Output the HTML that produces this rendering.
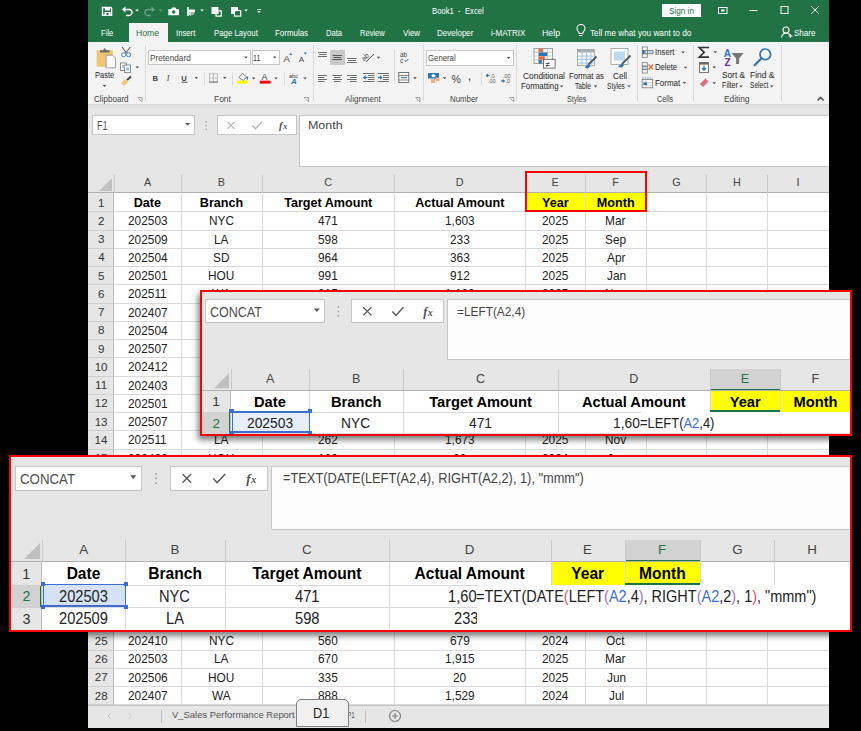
<!DOCTYPE html>
<html><head><meta charset="utf-8"><style>
html,body{margin:0;padding:0;}
body{width:861px;height:731px;position:relative;overflow:hidden;background:#000;font-family:"Liberation Sans",sans-serif;}
.a{position:absolute;}
.t{position:absolute;white-space:pre;}
.clip{position:absolute;overflow:hidden;}
</style></head><body>
<div class="a" style="left:88px;top:0px;width:741px;height:42px;background:#217346;"></div>
<div class="a" style="left:129px;top:22.5px;width:38.5px;height:19.5px;background:#f3f3f3;"></div>
<div class="a" style="left:88px;top:42px;width:741px;height:62px;background:#f3f3f3;"></div>
<div class="a" style="left:88px;top:104px;width:741px;height:5px;background:#e3e3e3;"></div>
<div class="a" style="left:88px;top:103.5px;width:741px;height:1px;background:#d6d6d6;"></div>
<div class="a" style="left:88px;top:109px;width:741px;height:84px;background:#e6e6e6;"></div>
<div class="t" style="left:432.08px;top:7.00px;font-size:9.30px;line-height:9.30px;color:#fff;transform:scaleX(0.8285);transform-origin:0 0;">Book1  -  Excel</div>
<div class="a" style="left:662px;top:4px;width:38.5px;height:12.6px;background:#fff;"></div>
<div class="t" style="left:668.63px;top:7.00px;font-size:9.30px;line-height:9.30px;color:#217346;transform:scaleX(0.8763);transform-origin:0 0;">Sign in</div>
<div class="t" style="left:101.09px;top:29.00px;font-size:9.30px;line-height:9.30px;color:#fff;transform:scaleX(0.8255);transform-origin:0 0;">File</div>
<div class="t" style="left:136.11px;top:29.00px;font-size:9.30px;line-height:9.30px;color:#217346;transform:scaleX(0.9313);transform-origin:0 0;">Home</div>
<div class="t" style="left:176.30px;top:29.00px;font-size:9.30px;line-height:9.30px;color:#fff;transform:scaleX(0.8316);transform-origin:0 0;">Insert</div>
<div class="t" style="left:213.78px;top:29.00px;font-size:9.30px;line-height:9.30px;color:#fff;transform:scaleX(0.8400);transform-origin:0 0;">Page Layout</div>
<div class="t" style="left:274.66px;top:29.00px;font-size:9.30px;line-height:9.30px;color:#fff;transform:scaleX(0.8539);transform-origin:0 0;">Formulas</div>
<div class="t" style="left:325.99px;top:29.00px;font-size:9.30px;line-height:9.30px;color:#fff;transform:scaleX(0.8157);transform-origin:0 0;">Data</div>
<div class="t" style="left:360.19px;top:29.00px;font-size:9.30px;line-height:9.30px;color:#fff;transform:scaleX(0.8132);transform-origin:0 0;">Review</div>
<div class="t" style="left:402.96px;top:29.00px;font-size:9.30px;line-height:9.30px;color:#fff;transform:scaleX(0.8522);transform-origin:0 0;">View</div>
<div class="t" style="left:437.16px;top:29.00px;font-size:9.30px;line-height:9.30px;color:#fff;transform:scaleX(0.8607);transform-origin:0 0;">Developer</div>
<div class="t" style="left:491.07px;top:29.00px;font-size:9.30px;line-height:9.30px;color:#fff;transform:scaleX(0.8716);transform-origin:0 0;">i-MATRIX</div>
<div class="t" style="left:542.30px;top:29.00px;font-size:9.30px;line-height:9.30px;color:#fff;transform:scaleX(0.9447);transform-origin:0 0;">Help</div>
<div class="t" style="left:589.84px;top:29.00px;font-size:9.30px;line-height:9.30px;color:#fff;transform:scaleX(0.8826);transform-origin:0 0;">Tell me what you want to do</div>
<div class="t" style="left:793.64px;top:29.00px;font-size:9.30px;line-height:9.30px;color:#fff;transform:scaleX(0.8644);transform-origin:0 0;">Share</div>
<div class="t" style="left:93.90px;top:95.00px;font-size:9.20px;line-height:9.20px;color:#444;transform:scaleX(0.8795);transform-origin:0 0;">Clipboard</div>
<div class="t" style="left:214.13px;top:95.00px;font-size:9.20px;line-height:9.20px;color:#444;transform:scaleX(0.9138);transform-origin:0 0;">Font</div>
<div class="t" style="left:344.80px;top:95.00px;font-size:9.20px;line-height:9.20px;color:#444;transform:scaleX(0.8740);transform-origin:0 0;">Alignment</div>
<div class="t" style="left:450.17px;top:95.00px;font-size:9.20px;line-height:9.20px;color:#444;transform:scaleX(0.8545);transform-origin:0 0;">Number</div>
<div class="t" style="left:567.18px;top:95.00px;font-size:9.20px;line-height:9.20px;color:#444;transform:scaleX(0.7726);transform-origin:0 0;">Styles</div>
<div class="t" style="left:657.04px;top:95.00px;font-size:9.20px;line-height:9.20px;color:#444;transform:scaleX(0.7924);transform-origin:0 0;">Cells</div>
<div class="t" style="left:724.33px;top:95.00px;font-size:9.20px;line-height:9.20px;color:#444;transform:scaleX(0.9077);transform-origin:0 0;">Editing</div>
<div class="a" style="left:144.5px;top:45px;width:1px;height:56px;background:#d9d9d9;"></div>
<div class="a" style="left:312.5px;top:45px;width:1px;height:56px;background:#d9d9d9;"></div>
<div class="a" style="left:423px;top:45px;width:1px;height:56px;background:#d9d9d9;"></div>
<div class="a" style="left:516.3px;top:45px;width:1px;height:56px;background:#d9d9d9;"></div>
<div class="a" style="left:637px;top:45px;width:1px;height:56px;background:#d9d9d9;"></div>
<div class="a" style="left:693.2px;top:45px;width:1px;height:56px;background:#d9d9d9;"></div>
<div class="a" style="left:780.5px;top:45px;width:1px;height:56px;background:#d9d9d9;"></div>
<div class="a" style="left:203.5px;top:72px;width:1px;height:13px;background:#d9d9d9;"></div>
<div class="a" style="left:232px;top:72px;width:1px;height:13px;background:#d9d9d9;"></div>
<div class="a" style="left:283.5px;top:72px;width:1px;height:13px;background:#d9d9d9;"></div>
<div class="a" style="left:393.7px;top:50px;width:1px;height:34px;background:#d9d9d9;"></div>
<div class="a" style="left:481.4px;top:72px;width:1px;height:13px;background:#d9d9d9;"></div>
<div class="t" style="left:95.20px;top:71.00px;font-size:9.20px;line-height:9.20px;color:#262626;transform:scaleX(0.8141);transform-origin:0 0;">Paste</div>
<div class="t" style="left:522.58px;top:72.00px;font-size:9.20px;line-height:9.20px;color:#262626;transform:scaleX(0.9123);transform-origin:0 0;">Conditional</div>
<div class="t" style="left:520.87px;top:82.00px;font-size:9.20px;line-height:9.20px;color:#262626;transform:scaleX(0.8560);transform-origin:0 0;">Formatting</div>
<div class="t" style="left:569.08px;top:72.00px;font-size:9.20px;line-height:9.20px;color:#262626;transform:scaleX(0.8428);transform-origin:0 0;">Format as</div>
<div class="t" style="left:575.27px;top:82.00px;font-size:9.20px;line-height:9.20px;color:#262626;transform:scaleX(0.7293);transform-origin:0 0;">Table</div>
<div class="t" style="left:612.79px;top:72.00px;font-size:9.20px;line-height:9.20px;color:#262626;transform:scaleX(0.8939);transform-origin:0 0;">Cell</div>
<div class="t" style="left:607.30px;top:82.00px;font-size:9.20px;line-height:9.20px;color:#262626;transform:scaleX(0.7150);transform-origin:0 0;">Styles</div>
<div class="t" style="left:654.80px;top:48.00px;font-size:9.20px;line-height:9.20px;color:#262626;transform:scaleX(0.8497);transform-origin:0 0;">Insert</div>
<div class="t" style="left:655.29px;top:63.00px;font-size:9.20px;line-height:9.20px;color:#262626;transform:scaleX(0.8334);transform-origin:0 0;">Delete</div>
<div class="t" style="left:655.06px;top:79.00px;font-size:9.20px;line-height:9.20px;color:#262626;transform:scaleX(0.8682);transform-origin:0 0;">Format</div>
<div class="t" style="left:722.33px;top:71.00px;font-size:9.20px;line-height:9.20px;color:#262626;transform:scaleX(0.9008);transform-origin:0 0;">Sort &amp;</div>
<div class="t" style="left:722.12px;top:81.00px;font-size:9.20px;line-height:9.20px;color:#262626;transform:scaleX(0.7826);transform-origin:0 0;">Filter</div>
<div class="t" style="left:750.33px;top:71.00px;font-size:9.20px;line-height:9.20px;color:#262626;transform:scaleX(0.9139);transform-origin:0 0;">Find &amp;</div>
<div class="t" style="left:749.70px;top:81.00px;font-size:9.20px;line-height:9.20px;color:#262626;transform:scaleX(0.7180);transform-origin:0 0;">Select</div>
<div class="a" style="left:148px;top:50.3px;width:103px;height:15px;background:#fff;box-sizing:border-box;border:1px solid #c6c6c6;"></div>
<div class="t" style="left:149.74px;top:54.00px;font-size:9.20px;line-height:9.20px;color:#444;transform:scaleX(0.8967);transform-origin:0 0;">Pretendard</div>
<div class="a" style="left:251.5px;top:50.3px;width:28px;height:15px;background:#fff;box-sizing:border-box;border:1px solid #c6c6c6;"></div>
<div class="t" style="left:253.27px;top:54.00px;font-size:9.20px;line-height:9.20px;color:#444;transform:scaleX(0.7722);transform-origin:0 0;">11</div>
<div class="a" style="left:426.2px;top:50.4px;width:87.5px;height:15.2px;background:#fff;box-sizing:border-box;border:1px solid #c6c6c6;"></div>
<div class="t" style="left:427.81px;top:54.00px;font-size:9.20px;line-height:9.20px;color:#444;transform:scaleX(0.8468);transform-origin:0 0;">General</div>
<div class="a" style="left:330px;top:50.2px;width:14.5px;height:15px;background:#c8c8c8;"></div>
<svg class="a" style="left:0;top:0" width="861" height="110" viewBox="0 0 861 110"><g fill="none" stroke="#fff" stroke-width="1.4"><path d="M103.2 7.5h7.6l0.8 0.8v7h-9.1v-7.8z"/></g><rect x="105" y="7.5" width="5" height="3" fill="#fff"/><rect x="104.5" y="12" width="6" height="3.3" fill="#fff"/><rect x="106.5" y="13" width="2" height="2.3" fill="#217346"/><path d="M124 9.5h5a3 3 0 0 1 0 6h-3" fill="none" stroke="#fff" stroke-width="1.4"/><path d="M122 9.5l3.5-3v6z" fill="#fff"/><polygon points="135.2,9.6 138.8,9.6 137,11.6" fill="#fff"/><path d="M153 9.5h-5a3 3 0 0 0 0 6h3" fill="none" stroke="#6aa383" stroke-width="1.4"/><path d="M155 9.5l-3.5-3v6z" fill="#6aa383"/><polygon points="158.7,9.6 162.3,9.6 160.5,11.6" fill="#6aa383"/><path d="M168.3 9.3h2.8l1.2-1.8h3l1.2 1.8h2.5v5.9h-10.7z" fill="#fff"/><circle cx="173.7" cy="12" r="1.8" fill="#217346"/><rect x="187" y="7" width="2" height="9" fill="#fff" opacity="0.8"/><rect x="188" y="9.5" width="7" height="3" fill="#fff"/><path d="M189 14h5M189 14l2-1.5M189 14l2 1.5" stroke="#fff" stroke-width="1" fill="none"/><polygon points="200.2,9.6 203.8,9.6 202,11.6" fill="#fff"/><rect x="211.5" y="7" width="7" height="7" fill="#fff"/><path d="M216 12v4.2h5.3v-5.3h-2.8" fill="none" stroke="#fff" stroke-width="1.2"/><rect x="231" y="7" width="7" height="7" fill="#fff"/><rect x="234.5" y="10.5" width="6.2" height="5.6" fill="#217346" stroke="#fff" stroke-width="1.2"/><polygon points="244.2,9.6 247.8,9.6 246,11.6" fill="#fff"/><rect x="257" y="9" width="4" height="1" fill="#fff"/><polygon points="257.2,11.1 260.8,11.1 259,13.1" fill="#fff"/><g fill="none" stroke="#fff" stroke-width="1"><rect x="718.5" y="7.5" width="8.5" height="6"/><line x1="749.5" y1="10.5" x2="757.5" y2="10.5"/><rect x="781" y="6.5" width="7" height="7"/><line x1="811" y1="6" x2="819" y2="14"/><line x1="819" y1="6" x2="811" y2="14"/></g><rect x="721" y="9.5" width="3.5" height="2" fill="#fff"/><g fill="none" stroke="#fff" stroke-width="1.1"><path d="M579 35.5h3.5M579.3 33.5c0-2-2.3-2.5-2.3-5a4 4 0 0 1 8 0c0 2.5-2.3 3-2.3 5z"/></g><g fill="none" stroke="#fff" stroke-width="1.1"><circle cx="786" cy="30" r="3"/><path d="M781.5 37.5c0.5-3 2.3-4.3 4.5-4.3s3 0.6 3.8 1.5"/><path d="M790.5 34v4M788.5 36h4"/></g><rect x="96.6" y="50" width="16.3" height="16.7" rx="1" fill="#f0c675"/><path d="M100 52.5h9.4v-2.2h-3l-1.7-2.4-1.7 2.4h-3z" fill="#6d6d6d"/><path d="M106.1 55.2h6.4l3 3v9.6h-9.4z" fill="#fff" stroke="#8c8c8c" stroke-width="0.8"/><polygon points="102.7,85.1 106.3,85.1 104.5,87.1" fill="#555"/><g fill="none" stroke="#3c7fc4" stroke-width="0.9"><circle cx="123.6" cy="54.7" r="2.1"/><circle cx="128.6" cy="54.7" r="2.1"/></g><path d="M122 47l4.5 6.2M130.2 47l-4.5 6.2" stroke="#444" stroke-width="1"/><rect x="120.5" y="63" width="6" height="7.5" fill="#fff" stroke="#777" stroke-width="0.8"/><rect x="124.5" y="65" width="6" height="7.5" fill="#fff" stroke="#777" stroke-width="0.8"/><rect x="126" y="67.5" width="3" height="3" fill="#9dc3e6"/><rect x="122" y="65" width="2.5" height="3" fill="#9dc3e6"/><polygon points="135.5,66.6 139.10000000000002,66.6 137.3,68.6" fill="#555"/><path d="M121 83l4-4 3 3-4 4z" fill="#f0c675"/><path d="M127 80l4-3.5" stroke="#444" stroke-width="2"/><text x="152.5" y="80.8" font-family="Liberation Sans" font-weight="bold" font-size="7.6" fill="#444">B</text><text x="166.8" y="80.8" font-family="Liberation Serif" font-style="italic" font-size="8" fill="#444">I</text><text x="181.3" y="80.5" font-family="Liberation Sans" font-weight="bold" font-size="7.6" fill="#444">U</text><rect x="181.5" y="81.8" width="6" height="0.9" fill="#444"/><polygon points="194.5,77.1 198.10000000000002,77.1 196.3,79.1" fill="#555"/><g fill="none" stroke="#bcbcbc" stroke-width="1"><rect x="209.5" y="73.8" width="8" height="8.2"/><path d="M213.5 74v8M209.5 78h8"/></g><rect x="209" y="81.5" width="9" height="1.2" fill="#888"/><polygon points="223.0,77.1 226.60000000000002,77.1 224.8,79.1" fill="#555"/><polygon points="244.1,56.5 247.70000000000002,56.5 245.9,58.5" fill="#555"/><polygon points="272.9,56.5 276.5,56.5 274.7,58.5" fill="#555"/><text x="283.5" y="61.8" font-family="Liberation Sans" font-size="9.5" fill="#444">A</text><polygon points="289,55 292.4,55 290.7,53" fill="#2e75b6"/><text x="298.8" y="61.8" font-family="Liberation Sans" font-size="8" fill="#444">A</text><polygon points="303.8,52.6 307,52.6 305.4,54.5" fill="#2e75b6"/><path d="M239 77.5l3.5-4 4 3.5-3 3.5z" fill="#fff" stroke="#666" stroke-width="0.9"/><path d="M246.5 76.5q1.5 1.5 0.8 3" stroke="#2e75b6" stroke-width="1.4" fill="none"/><rect x="237" y="80.7" width="11.2" height="2.9" fill="#ffff00"/><polygon points="251.79999999999998,77.39999999999999 255.4,77.39999999999999 253.6,79.39999999999999" fill="#555"/><text x="261.6" y="80.3" font-family="Liberation Sans" font-size="9" fill="#444">A</text><rect x="259.7" y="80.7" width="10.8" height="2.9" fill="#ff0000"/><polygon points="274.2,77.39999999999999 277.8,77.39999999999999 276,79.39999999999999" fill="#555"/><text x="289" y="77.5" font-family="Liberation Sans" font-size="6" fill="#444" textLength="9" lengthAdjust="spacingAndGlyphs">abc</text><text x="291" y="83.8" font-family="Liberation Sans" font-weight="bold" font-style="italic" font-size="8" fill="#2e75b6">A</text><polygon points="303.2,77.39999999999999 306.8,77.39999999999999 305,79.39999999999999" fill="#555"/><rect x="318" y="52" width="9" height="1" fill="#6e6e6e"/><rect x="319" y="54" width="7.5" height="1" fill="#6e6e6e"/><rect x="318" y="56" width="9" height="1" fill="#6e6e6e"/><rect x="332.5" y="55" width="9.5" height="1" fill="#555"/><rect x="333.5" y="57" width="7.5" height="1" fill="#555"/><rect x="332.5" y="59" width="9.5" height="1" fill="#555"/><rect x="347" y="58" width="9.699999999999989" height="1" fill="#6e6e6e"/><rect x="348" y="60" width="8" height="1" fill="#6e6e6e"/><rect x="347" y="62" width="9.699999999999989" height="1" fill="#6e6e6e"/><g transform="translate(366.5,59) rotate(-45)"><text x="-3.5" y="0" font-family="Liberation Sans" font-size="7" fill="#444">ab</text></g><path d="M366 62l8-8" stroke="#555" stroke-width="1"/><polygon points="376.8,56.7 380.40000000000003,56.7 378.6,58.7" fill="#555"/><rect x="318" y="75" width="9" height="1" fill="#6e6e6e"/><rect x="318" y="77" width="6.5" height="1" fill="#6e6e6e"/><rect x="318" y="79" width="9" height="1" fill="#6e6e6e"/><rect x="318" y="81" width="6.5" height="1" fill="#6e6e6e"/><rect x="332.5" y="75" width="9.5" height="1" fill="#6e6e6e"/><rect x="334" y="77" width="6.5" height="1" fill="#6e6e6e"/><rect x="332.5" y="79" width="9.5" height="1" fill="#6e6e6e"/><rect x="334" y="81" width="6.5" height="1" fill="#6e6e6e"/><rect x="347" y="75" width="9.699999999999989" height="1" fill="#6e6e6e"/><rect x="350" y="77" width="6.699999999999989" height="1" fill="#6e6e6e"/><rect x="347" y="79" width="9.699999999999989" height="1" fill="#6e6e6e"/><rect x="350" y="81" width="6.699999999999989" height="1" fill="#6e6e6e"/><rect x="363" y="73" width="11.5" height="1" fill="#6e6e6e"/><rect x="368" y="75" width="6.5" height="1" fill="#6e6e6e"/><rect x="368" y="77" width="6.5" height="1" fill="#6e6e6e"/><rect x="368" y="79" width="6.5" height="1" fill="#6e6e6e"/><rect x="363" y="81" width="11.5" height="1" fill="#6e6e6e"/><path d="M363.5 77.5h4" stroke="#2e75b6" stroke-width="1.3"/><path d="M363 77.5l2.5-2.3v4.6z" fill="#2e75b6"/><rect x="377.7" y="73" width="11.300000000000011" height="1" fill="#6e6e6e"/><rect x="383" y="75" width="6" height="1" fill="#6e6e6e"/><rect x="383" y="77" width="6" height="1" fill="#6e6e6e"/><rect x="383" y="79" width="6" height="1" fill="#6e6e6e"/><rect x="377.7" y="81" width="11.300000000000011" height="1" fill="#6e6e6e"/><path d="M378 77.5h4" stroke="#2e75b6" stroke-width="1.3"/><path d="M382.5 77.5l-2.5-2.3v4.6z" fill="#2e75b6"/><text x="400" y="57" font-family="Liberation Sans" font-size="6.5" fill="#444">ab</text><text x="400" y="62.5" font-family="Liberation Sans" font-size="6.5" fill="#444">c</text><path d="M404.5 60.5l1.5 1 2.5-2.5" stroke="#2e75b6" stroke-width="1" fill="none"/><rect x="398.8" y="72.5" width="10" height="10" fill="#fff" stroke="#666" stroke-width="0.9"/><path d="M399 75.5h10M399 80h10" stroke="#666" stroke-width="0.8"/><path d="M401 77.7h6" stroke="#2e75b6" stroke-width="1.1"/><polygon points="413.2,77.3 416.8,77.3 415,79.3" fill="#555"/><polygon points="506.9,56.9 510.5,56.9 508.7,58.9" fill="#555"/><rect x="428" y="73" width="11" height="5.5" fill="#2e75b6"/><ellipse cx="433.5" cy="75.7" rx="2" ry="1.6" fill="#fff"/><rect x="431" y="79" width="4" height="4" fill="#f4b183"/><rect x="436" y="77.5" width="3.5" height="3.5" fill="#f4b183"/><polygon points="442.8,77.3 446.40000000000003,77.3 444.6,79.3" fill="#555"/><text x="451.5" y="82.5" font-family="Liberation Sans" font-size="10.5" fill="#444">%</text><text x="468.3" y="80" font-family="Liberation Sans" font-weight="bold" font-size="9" fill="#444">,</text><text x="490" y="77.5" font-family="Liberation Sans" font-size="5.5" fill="#555">.0</text><text x="488" y="83" font-family="Liberation Sans" font-size="5.5" fill="#555">.00</text><path d="M486 75.5h3.5M486 75.5l1.5-1.3v2.6z" stroke="#2e75b6" fill="#2e75b6" stroke-width="1"/><text x="503" y="77.5" font-family="Liberation Sans" font-size="5.5" fill="#555">.00</text><text x="505.5" y="83" font-family="Liberation Sans" font-size="5.5" fill="#555">.0</text><path d="M501 81h3.5M504.5 81l-1.5-1.3v2.6z" stroke="#2e75b6" fill="#2e75b6" stroke-width="1"/><g stroke="#888" stroke-width="0.8" fill="#fff"><rect x="534" y="48.5" width="18.5" height="15"/></g><path d="M534 52.25h18.5M534 56h18.5M534 59.75h18.5M538.5 48.5v15M543 48.5v15M547.5 48.5v15" stroke="#aaa" stroke-width="0.6"/><rect x="538.8" y="48.7" width="4" height="3.5" fill="#e46c3c"/><rect x="538.8" y="52.5" width="8.5" height="3.5" fill="#2e75b6"/><rect x="538.8" y="56.3" width="6" height="3.5" fill="#e46c3c"/><rect x="538.8" y="60" width="3" height="3.5" fill="#2e75b6"/><rect x="543.5" y="59.3" width="11.6" height="8.8" fill="#fff" stroke="#666" stroke-width="0.9"/><text x="545.6" y="66.5" font-family="Liberation Sans" font-size="8" fill="#333">≠</text><rect x="577.5" y="49.5" width="17" height="16" fill="#fff" stroke="#999" stroke-width="0.8"/><rect x="577.5" y="49.5" width="17" height="3" fill="#aaa"/><path d="M577.5 56h17M577.5 59.5h17M577.5 63h17M582 49.5v16M586.5 49.5v16M591 49.5v16" stroke="#9dc3e6" stroke-width="1"/><path d="M588 65l8.5-8.5" stroke="#555" stroke-width="1.8"/><path d="M584.5 67.5l4-3.5 2 2-2.5 2.5z" fill="#2e75b6"/><rect x="611" y="48.5" width="17" height="16" fill="#fff" stroke="#999" stroke-width="0.8"/><rect x="614" y="51.5" width="11" height="9" fill="#bdd7ee"/><path d="M622 64l8.5-8.5" stroke="#555" stroke-width="1.8"/><path d="M618 66.7l4-3.5 2 2-2.5 2.5z" fill="#2e75b6"/><polygon points="559.8000000000001,85.6 563.4,85.6 561.6,87.6" fill="#555"/><polygon points="593.8000000000001,85.6 597.4,85.6 595.6,87.6" fill="#555"/><polygon points="627.2,85.6 630.8,85.6 629,87.6" fill="#555"/><g fill="#fff" stroke="#777" stroke-width="0.8"><rect x="642.3" y="47" width="5" height="3.3"/><rect x="642.3" y="50.5" width="5" height="3.3"/><rect x="642.3" y="54" width="5" height="3.3"/><rect x="647.5" y="50.5" width="5.5" height="3.3" fill="#bdd7ee"/></g><path d="M642 52h4M642 52l2-1.5v3z" stroke="#2e75b6" fill="#2e75b6" stroke-width="1"/><polygon points="681.2,51.5 684.8,51.5 683,53.5" fill="#555"/><g fill="#fff" stroke="#777" stroke-width="0.8"><rect x="642.3" y="62.7" width="5" height="3.3"/><rect x="642.3" y="66.2" width="5" height="3.3" fill="#bdd7ee"/><rect x="642.3" y="69.7" width="5" height="3.3"/></g><path d="M648.5 64.5l4.5 5M653 64.5l-4.5 5" stroke="#e46c3c" stroke-width="1.2"/><polygon points="683.8000000000001,66.8 687.4,66.8 685.6,68.8" fill="#555"/><rect x="642.2" y="79.5" width="10.5" height="8.3" fill="#fff" stroke="#777" stroke-width="0.8"/><path d="M642.2 82.3h10.5M642.2 85h10.5M646 79.5v8.3" stroke="#aaa" stroke-width="0.6"/><rect x="643.5" y="82.5" width="3.5" height="2.5" fill="#2e75b6"/><path d="M642.2 78h10.5" stroke="#2e75b6" stroke-width="0.8" stroke-dasharray="1.5 1"/><polygon points="682.6,82.1 686.1999999999999,82.1 684.4,84.1" fill="#555"/><path d="M709 47.5h-9.8l5 4.8-5 4.8h9.8" fill="none" stroke="#333" stroke-width="1.6"/><polygon points="713.4000000000001,51.300000000000004 717.0,51.300000000000004 715.2,53.300000000000004" fill="#555"/><polygon points="712.4000000000001,66.6 716.0,66.6 714.2,68.6" fill="#555"/><polygon points="712.4000000000001,82.3 716.0,82.3 714.2,84.3" fill="#555"/><rect x="699.5" y="62.6" width="9" height="9.8" fill="#fff" stroke="#666" stroke-width="0.9"/><rect x="699.5" y="62.6" width="9" height="2" fill="#666"/><path d="M704 65.5v4.5M702 68l2 2.2 2-2.2" stroke="#2e75b6" stroke-width="1.3" fill="none"/><path d="M700 84l5.5-5.5 3 3-5.5 5.5z" fill="#e06a80"/><text x="723.8" y="56.5" font-family="Liberation Sans" font-weight="bold" font-size="10" fill="#2e75b6">A</text><text x="724.5" y="66" font-family="Liberation Sans" font-weight="bold" font-size="10" fill="#7030a0">Z</text><path d="M731.6 53h12l-4.5 5.5v5.4h-3v-5.4z" fill="#777"/><circle cx="765.3" cy="54.3" r="5.3" fill="none" stroke="#2e75b6" stroke-width="1.7"/><path d="M761.5 58.2l-7 7" stroke="#2e75b6" stroke-width="2.2" stroke-linecap="round"/><polygon points="739.2,85.6 742.8,85.6 741,87.6" fill="#555"/><polygon points="770.0,85.6 773.5999999999999,85.6 771.8,87.6" fill="#555"/><path d="M817.6 100.4l3-3 3 3" fill="none" stroke="#555" stroke-width="1.5"/><path d="M137.5 97.5h4.5v4.5" fill="none" stroke="#888" stroke-width="0.8"/><path d="M138.5 98.5l3 3" stroke="#888" stroke-width="0.8"/><path d="M304 97.5h4.5v4.5" fill="none" stroke="#888" stroke-width="0.8"/><path d="M305 98.5l3 3" stroke="#888" stroke-width="0.8"/><path d="M415.4 97.5h4.5v4.5" fill="none" stroke="#888" stroke-width="0.8"/><path d="M416.4 98.5l3 3" stroke="#888" stroke-width="0.8"/><path d="M509.3 97.5h4.5v4.5" fill="none" stroke="#888" stroke-width="0.8"/><path d="M510.3 98.5l3 3" stroke="#888" stroke-width="0.8"/></svg>
<div class="clip" style="left:88px;top:109px;width:741px;height:597px;">
<div class="a" style="left:4px;top:6px;width:103px;height:20.400000000000006px;background:#fff;box-sizing:border-box;border:1px solid #c6c6c6;"></div>
<div class="a" style="left:129px;top:6px;width:80px;height:20.400000000000006px;background:#fff;box-sizing:border-box;border:1px solid #c6c6c6;"></div>
<div class="a" style="left:211.3px;top:6px;width:700.7px;height:52.19999999999999px;background:#fff;box-sizing:border-box;border:1px solid #c6c6c6;"></div>
<svg class="a" style="left:0;top:0;overflow:visible" width="10" height="10"><polygon points="97.20,13.90 102.20,13.90 99.70,16.80" fill="#555"/><rect x="117.50" y="12.10" width="1.30" height="1.30" fill="#999"/><rect x="117.50" y="15.80" width="1.30" height="1.30" fill="#999"/><rect x="117.50" y="19.60" width="1.30" height="1.30" fill="#999"/><path d="M139.50,12.80L146.50,19.80M146.50,12.80L139.50,19.80" stroke="#b0b0b0" stroke-width="1.10"/><path d="M164.50,16.50L167.50,19.80L174.00,12.80" fill="none" stroke="#b0b0b0" stroke-width="1.25"/><text x="191.00" y="20.00" font-family="Liberation Serif" font-style="italic" font-weight="bold" font-size="10.50" fill="#505050">f</text><text x="195.20" y="20.00" font-family="Liberation Serif" font-style="italic" font-weight="bold" font-size="8.00" fill="#505050">x</text></svg>
<div class="t" style="left:8.77px;top:11.00px;font-size:12.30px;line-height:12.30px;color:#505050;transform:scaleX(0.7427);transform-origin:0 0;">F1</div>
<div class="t" style="left:219.60px;top:11.00px;font-size:11.50px;line-height:11.50px;color:#444;transform:scaleX(1.0824);transform-origin:0 0;">Month</div>
<div class="a" style="left:26px;top:84px;width:714.5px;height:529.5400000000001px;background:#fff;"></div>
<div class="a" style="left:0px;top:83.30000000000001px;width:740.5px;height:1.0999999999999943px;background:#b0b0b0;"></div>
<div class="a" style="left:26px;top:66px;width:1px;height:18px;background:#c9c9c9;"></div>
<div class="a" style="left:93.19999999999999px;top:66px;width:1px;height:18px;background:#c9c9c9;"></div>
<div class="a" style="left:174px;top:66px;width:1px;height:18px;background:#c9c9c9;"></div>
<div class="a" style="left:306.4px;top:66px;width:1px;height:18px;background:#c9c9c9;"></div>
<div class="a" style="left:437.4px;top:66px;width:1px;height:18px;background:#c9c9c9;"></div>
<div class="a" style="left:497.4px;top:66px;width:1px;height:18px;background:#c9c9c9;"></div>
<div class="a" style="left:558.2px;top:66px;width:1px;height:18px;background:#c9c9c9;"></div>
<div class="a" style="left:618.4px;top:66px;width:1px;height:18px;background:#c9c9c9;"></div>
<div class="a" style="left:679.3px;top:66px;width:1px;height:18px;background:#c9c9c9;"></div>
<div class="a" style="left:740.5px;top:66px;width:1px;height:18px;background:#c9c9c9;"></div>
<div class="a" style="left:0px;top:84px;width:26px;height:529.5400000000001px;background:#e6e6e6;"></div>
<div class="a" style="left:25.299999999999997px;top:84px;width:1px;height:529.5400000000001px;background:#bdbdbd;"></div>
<div class="a" style="left:437.5px;top:84px;width:121.0px;height:18.25999999999999px;background:#ffff00;"></div>
<div class="a" style="left:0px;top:102.25999999999999px;width:25.299999999999997px;height:1px;background:#cfcfcf;"></div>
<div class="a" style="left:26px;top:102.25999999999999px;width:714.5px;height:1px;background:#dadada;"></div>
<div class="a" style="left:0px;top:120.52000000000001px;width:25.299999999999997px;height:1px;background:#cfcfcf;"></div>
<div class="a" style="left:26px;top:120.52000000000001px;width:714.5px;height:1px;background:#dadada;"></div>
<div class="a" style="left:0px;top:138.78px;width:25.299999999999997px;height:1px;background:#cfcfcf;"></div>
<div class="a" style="left:26px;top:138.78px;width:714.5px;height:1px;background:#dadada;"></div>
<div class="a" style="left:0px;top:157.04000000000002px;width:25.299999999999997px;height:1px;background:#cfcfcf;"></div>
<div class="a" style="left:26px;top:157.04000000000002px;width:714.5px;height:1px;background:#dadada;"></div>
<div class="a" style="left:0px;top:175.3px;width:25.299999999999997px;height:1px;background:#cfcfcf;"></div>
<div class="a" style="left:26px;top:175.3px;width:714.5px;height:1px;background:#dadada;"></div>
<div class="a" style="left:0px;top:193.56px;width:25.299999999999997px;height:1px;background:#cfcfcf;"></div>
<div class="a" style="left:26px;top:193.56px;width:714.5px;height:1px;background:#dadada;"></div>
<div class="a" style="left:0px;top:211.82px;width:25.299999999999997px;height:1px;background:#cfcfcf;"></div>
<div class="a" style="left:26px;top:211.82px;width:714.5px;height:1px;background:#dadada;"></div>
<div class="a" style="left:0px;top:230.08000000000004px;width:25.299999999999997px;height:1px;background:#cfcfcf;"></div>
<div class="a" style="left:26px;top:230.08000000000004px;width:714.5px;height:1px;background:#dadada;"></div>
<div class="a" style="left:0px;top:248.34000000000003px;width:25.299999999999997px;height:1px;background:#cfcfcf;"></div>
<div class="a" style="left:26px;top:248.34000000000003px;width:714.5px;height:1px;background:#dadada;"></div>
<div class="a" style="left:0px;top:266.6px;width:25.299999999999997px;height:1px;background:#cfcfcf;"></div>
<div class="a" style="left:26px;top:266.6px;width:714.5px;height:1px;background:#dadada;"></div>
<div class="a" style="left:0px;top:284.86px;width:25.299999999999997px;height:1px;background:#cfcfcf;"></div>
<div class="a" style="left:26px;top:284.86px;width:714.5px;height:1px;background:#dadada;"></div>
<div class="a" style="left:0px;top:303.12px;width:25.299999999999997px;height:1px;background:#cfcfcf;"></div>
<div class="a" style="left:26px;top:303.12px;width:714.5px;height:1px;background:#dadada;"></div>
<div class="a" style="left:0px;top:321.38px;width:25.299999999999997px;height:1px;background:#cfcfcf;"></div>
<div class="a" style="left:26px;top:321.38px;width:714.5px;height:1px;background:#dadada;"></div>
<div class="a" style="left:0px;top:339.64px;width:25.299999999999997px;height:1px;background:#cfcfcf;"></div>
<div class="a" style="left:26px;top:339.64px;width:714.5px;height:1px;background:#dadada;"></div>
<div class="a" style="left:0px;top:357.90000000000003px;width:25.299999999999997px;height:1px;background:#cfcfcf;"></div>
<div class="a" style="left:26px;top:357.90000000000003px;width:714.5px;height:1px;background:#dadada;"></div>
<div class="a" style="left:0px;top:376.16px;width:25.299999999999997px;height:1px;background:#cfcfcf;"></div>
<div class="a" style="left:26px;top:376.16px;width:714.5px;height:1px;background:#dadada;"></div>
<div class="a" style="left:0px;top:394.42px;width:25.299999999999997px;height:1px;background:#cfcfcf;"></div>
<div class="a" style="left:26px;top:394.42px;width:714.5px;height:1px;background:#dadada;"></div>
<div class="a" style="left:0px;top:412.68000000000006px;width:25.299999999999997px;height:1px;background:#cfcfcf;"></div>
<div class="a" style="left:26px;top:412.68000000000006px;width:714.5px;height:1px;background:#dadada;"></div>
<div class="a" style="left:0px;top:430.94000000000005px;width:25.299999999999997px;height:1px;background:#cfcfcf;"></div>
<div class="a" style="left:26px;top:430.94000000000005px;width:714.5px;height:1px;background:#dadada;"></div>
<div class="a" style="left:0px;top:449.20000000000005px;width:25.299999999999997px;height:1px;background:#cfcfcf;"></div>
<div class="a" style="left:26px;top:449.20000000000005px;width:714.5px;height:1px;background:#dadada;"></div>
<div class="a" style="left:0px;top:467.46000000000004px;width:25.299999999999997px;height:1px;background:#cfcfcf;"></div>
<div class="a" style="left:26px;top:467.46000000000004px;width:714.5px;height:1px;background:#dadada;"></div>
<div class="a" style="left:0px;top:485.72px;width:25.299999999999997px;height:1px;background:#cfcfcf;"></div>
<div class="a" style="left:26px;top:485.72px;width:714.5px;height:1px;background:#dadada;"></div>
<div class="a" style="left:0px;top:503.98px;width:25.299999999999997px;height:1px;background:#cfcfcf;"></div>
<div class="a" style="left:26px;top:503.98px;width:714.5px;height:1px;background:#dadada;"></div>
<div class="a" style="left:0px;top:522.24px;width:25.299999999999997px;height:1px;background:#cfcfcf;"></div>
<div class="a" style="left:26px;top:522.24px;width:714.5px;height:1px;background:#dadada;"></div>
<div class="a" style="left:0px;top:540.5px;width:25.299999999999997px;height:1px;background:#cfcfcf;"></div>
<div class="a" style="left:26px;top:540.5px;width:714.5px;height:1px;background:#dadada;"></div>
<div class="a" style="left:0px;top:558.76px;width:25.299999999999997px;height:1px;background:#cfcfcf;"></div>
<div class="a" style="left:26px;top:558.76px;width:714.5px;height:1px;background:#dadada;"></div>
<div class="a" style="left:0px;top:577.02px;width:25.299999999999997px;height:1px;background:#cfcfcf;"></div>
<div class="a" style="left:26px;top:577.02px;width:714.5px;height:1px;background:#dadada;"></div>
<div class="a" style="left:0px;top:595.28px;width:25.299999999999997px;height:1px;background:#cfcfcf;"></div>
<div class="a" style="left:26px;top:595.28px;width:714.5px;height:1px;background:#dadada;"></div>
<div class="a" style="left:0px;top:613.5400000000001px;width:25.299999999999997px;height:1px;background:#cfcfcf;"></div>
<div class="a" style="left:26px;top:613.5400000000001px;width:714.5px;height:1px;background:#dadada;"></div>
<div class="a" style="left:93.19999999999999px;top:84px;width:1px;height:529.5400000000001px;background:#dadada;"></div>
<div class="a" style="left:174px;top:84px;width:1px;height:529.5400000000001px;background:#dadada;"></div>
<div class="a" style="left:306.4px;top:84px;width:1px;height:529.5400000000001px;background:#dadada;"></div>
<div class="a" style="left:437.4px;top:84px;width:1px;height:529.5400000000001px;background:#dadada;"></div>
<div class="a" style="left:497.4px;top:84px;width:1px;height:529.5400000000001px;background:#dadada;"></div>
<div class="a" style="left:558.2px;top:84px;width:1px;height:529.5400000000001px;background:#dadada;"></div>
<div class="a" style="left:618.4px;top:84px;width:1px;height:529.5400000000001px;background:#dadada;"></div>
<div class="a" style="left:679.3px;top:84px;width:1px;height:529.5400000000001px;background:#dadada;"></div>
<div class="a" style="left:740.5px;top:84px;width:1px;height:529.5400000000001px;background:#dadada;"></div>
<svg class="a" style="left:11.00px;top:69.00px" width="14.0" height="14.0"><polygon points="13.00,0 13.00,13.00 0,13.00" fill="#c0c0c0"/></svg>
<div class="t" style="left:56.01px;top:68.00px;font-size:10.80px;line-height:10.80px;color:#444;">A</div>
<div class="t" style="left:129.85px;top:68.00px;font-size:10.80px;line-height:10.80px;color:#444;">B</div>
<div class="t" style="left:236.23px;top:68.00px;font-size:10.80px;line-height:10.80px;color:#444;">C</div>
<div class="t" style="left:367.82px;top:68.00px;font-size:10.80px;line-height:10.80px;color:#444;">D</div>
<div class="t" style="left:463.59px;top:68.00px;font-size:10.80px;line-height:10.80px;color:#444;">E</div>
<div class="t" style="left:524.29px;top:68.00px;font-size:10.80px;line-height:10.80px;color:#444;">F</div>
<div class="t" style="left:584.22px;top:68.00px;font-size:10.80px;line-height:10.80px;color:#444;">G</div>
<div class="t" style="left:644.96px;top:68.00px;font-size:10.80px;line-height:10.80px;color:#444;">H</div>
<div class="t" style="left:708.41px;top:68.00px;font-size:10.80px;line-height:10.80px;color:#444;">I</div>
<div class="t" style="left:9.91px;top:88.00px;font-size:11.60px;line-height:11.60px;color:#333;">1</div>
<div class="t" style="left:45.77px;top:88.00px;font-size:12.60px;line-height:12.60px;color:#000;font-weight:bold;">Date</div>
<div class="t" style="left:111.86px;top:88.00px;font-size:12.60px;line-height:12.60px;color:#000;font-weight:bold;">Branch</div>
<div class="t" style="left:196.13px;top:88.00px;font-size:12.60px;line-height:12.60px;color:#000;font-weight:bold;">Target Amount</div>
<div class="t" style="left:327.26px;top:88.00px;font-size:12.60px;line-height:12.60px;color:#000;font-weight:bold;">Actual Amount</div>
<div class="t" style="left:454.04px;top:88.00px;font-size:12.60px;line-height:12.60px;color:#000;font-weight:bold;">Year</div>
<div class="t" style="left:508.87px;top:88.00px;font-size:12.60px;line-height:12.60px;color:#000;font-weight:bold;">Month</div>
<div class="t" style="left:10.08px;top:106.00px;font-size:11.60px;line-height:11.60px;color:#333;">2</div>
<div class="t" style="left:39.75px;top:106.00px;font-size:12.90px;line-height:12.90px;color:#222;transform:scaleX(0.9200);transform-origin:0 0;">202503</div>
<div class="t" style="left:120.81px;top:106.00px;font-size:12.90px;line-height:12.90px;color:#222;transform:scaleX(0.9200);transform-origin:0 0;">NYC</div>
<div class="t" style="left:230.47px;top:106.00px;font-size:12.90px;line-height:12.90px;color:#222;transform:scaleX(0.9200);transform-origin:0 0;">471</div>
<div class="t" style="left:356.86px;top:106.00px;font-size:12.90px;line-height:12.90px;color:#222;transform:scaleX(0.9200);transform-origin:0 0;">1,603</div>
<div class="t" style="left:454.14px;top:106.00px;font-size:12.90px;line-height:12.90px;color:#222;transform:scaleX(0.9200);transform-origin:0 0;">2025</div>
<div class="t" style="left:517.21px;top:106.00px;font-size:12.90px;line-height:12.90px;color:#222;transform:scaleX(0.9200);transform-origin:0 0;">Mar</div>
<div class="t" style="left:10.08px;top:124.00px;font-size:11.60px;line-height:11.60px;color:#333;">3</div>
<div class="t" style="left:39.78px;top:125.00px;font-size:12.90px;line-height:12.90px;color:#222;transform:scaleX(0.9200);transform-origin:0 0;">202509</div>
<div class="t" style="left:125.89px;top:125.00px;font-size:12.90px;line-height:12.90px;color:#222;transform:scaleX(0.9200);transform-origin:0 0;">LA</div>
<div class="t" style="left:230.32px;top:125.00px;font-size:12.90px;line-height:12.90px;color:#222;transform:scaleX(0.9200);transform-origin:0 0;">598</div>
<div class="t" style="left:361.96px;top:125.00px;font-size:12.90px;line-height:12.90px;color:#222;transform:scaleX(0.9200);transform-origin:0 0;">233</div>
<div class="t" style="left:454.14px;top:125.00px;font-size:12.90px;line-height:12.90px;color:#222;transform:scaleX(0.9200);transform-origin:0 0;">2025</div>
<div class="t" style="left:517.21px;top:125.00px;font-size:12.90px;line-height:12.90px;color:#222;transform:scaleX(0.9200);transform-origin:0 0;">Sep</div>
<div class="t" style="left:10.14px;top:142.00px;font-size:11.60px;line-height:11.60px;color:#333;">4</div>
<div class="t" style="left:39.69px;top:143.00px;font-size:12.90px;line-height:12.90px;color:#222;transform:scaleX(0.9200);transform-origin:0 0;">202504</div>
<div class="t" style="left:125.38px;top:143.00px;font-size:12.90px;line-height:12.90px;color:#222;transform:scaleX(0.9200);transform-origin:0 0;">SD</div>
<div class="t" style="left:230.23px;top:143.00px;font-size:12.90px;line-height:12.90px;color:#222;transform:scaleX(0.9200);transform-origin:0 0;">964</div>
<div class="t" style="left:362.02px;top:143.00px;font-size:12.90px;line-height:12.90px;color:#222;transform:scaleX(0.9200);transform-origin:0 0;">363</div>
<div class="t" style="left:454.14px;top:143.00px;font-size:12.90px;line-height:12.90px;color:#222;transform:scaleX(0.9200);transform-origin:0 0;">2025</div>
<div class="t" style="left:518.66px;top:143.00px;font-size:12.90px;line-height:12.90px;color:#222;transform:scaleX(0.9200);transform-origin:0 0;">Apr</div>
<div class="t" style="left:10.08px;top:161.00px;font-size:11.60px;line-height:11.60px;color:#333;">5</div>
<div class="t" style="left:39.78px;top:161.00px;font-size:12.90px;line-height:12.90px;color:#222;transform:scaleX(0.9200);transform-origin:0 0;">202501</div>
<div class="t" style="left:120.40px;top:161.00px;font-size:12.90px;line-height:12.90px;color:#222;transform:scaleX(0.9200);transform-origin:0 0;">HOU</div>
<div class="t" style="left:230.32px;top:161.00px;font-size:12.90px;line-height:12.90px;color:#222;transform:scaleX(0.9200);transform-origin:0 0;">991</div>
<div class="t" style="left:362.05px;top:161.00px;font-size:12.90px;line-height:12.90px;color:#222;transform:scaleX(0.9200);transform-origin:0 0;">912</div>
<div class="t" style="left:454.14px;top:161.00px;font-size:12.90px;line-height:12.90px;color:#222;transform:scaleX(0.9200);transform-origin:0 0;">2025</div>
<div class="t" style="left:518.54px;top:161.00px;font-size:12.90px;line-height:12.90px;color:#222;transform:scaleX(0.9200);transform-origin:0 0;">Jan</div>
<div class="t" style="left:10.02px;top:179.00px;font-size:11.60px;line-height:11.60px;color:#333;">6</div>
<div class="t" style="left:40.23px;top:179.00px;font-size:12.90px;line-height:12.90px;color:#222;transform:scaleX(0.9200);transform-origin:0 0;">202511</div>
<div class="t" style="left:124.25px;top:179.00px;font-size:12.90px;line-height:12.90px;color:#222;transform:scaleX(0.9200);transform-origin:0 0;">WA</div>
<div class="t" style="left:230.32px;top:179.00px;font-size:12.90px;line-height:12.90px;color:#222;transform:scaleX(0.9200);transform-origin:0 0;">315</div>
<div class="t" style="left:356.83px;top:179.00px;font-size:12.90px;line-height:12.90px;color:#222;transform:scaleX(0.9200);transform-origin:0 0;">1,120</div>
<div class="t" style="left:454.14px;top:179.00px;font-size:12.90px;line-height:12.90px;color:#222;transform:scaleX(0.9200);transform-origin:0 0;">2025</div>
<div class="t" style="left:516.79px;top:179.00px;font-size:12.90px;line-height:12.90px;color:#222;transform:scaleX(0.9200);transform-origin:0 0;">Nov</div>
<div class="t" style="left:10.08px;top:197.00px;font-size:11.60px;line-height:11.60px;color:#333;">7</div>
<div class="t" style="left:39.81px;top:198.00px;font-size:12.90px;line-height:12.90px;color:#222;transform:scaleX(0.9200);transform-origin:0 0;">202407</div>
<div class="t" style="left:120.81px;top:198.00px;font-size:12.90px;line-height:12.90px;color:#222;transform:scaleX(0.9200);transform-origin:0 0;">NYC</div>
<div class="t" style="left:230.44px;top:198.00px;font-size:12.90px;line-height:12.90px;color:#222;transform:scaleX(0.9200);transform-origin:0 0;">423</div>
<div class="t" style="left:356.86px;top:198.00px;font-size:12.90px;line-height:12.90px;color:#222;transform:scaleX(0.9200);transform-origin:0 0;">1,208</div>
<div class="t" style="left:454.08px;top:198.00px;font-size:12.90px;line-height:12.90px;color:#222;transform:scaleX(0.9200);transform-origin:0 0;">2024</div>
<div class="t" style="left:520.53px;top:198.00px;font-size:12.90px;line-height:12.90px;color:#222;transform:scaleX(0.9200);transform-origin:0 0;">Jul</div>
<div class="t" style="left:10.05px;top:215.00px;font-size:11.60px;line-height:11.60px;color:#333;">8</div>
<div class="t" style="left:39.69px;top:216.00px;font-size:12.90px;line-height:12.90px;color:#222;transform:scaleX(0.9200);transform-origin:0 0;">202504</div>
<div class="t" style="left:125.89px;top:216.00px;font-size:12.90px;line-height:12.90px;color:#222;transform:scaleX(0.9200);transform-origin:0 0;">LA</div>
<div class="t" style="left:230.32px;top:216.00px;font-size:12.90px;line-height:12.90px;color:#222;transform:scaleX(0.9200);transform-origin:0 0;">508</div>
<div class="t" style="left:362.05px;top:216.00px;font-size:12.90px;line-height:12.90px;color:#222;transform:scaleX(0.9200);transform-origin:0 0;">977</div>
<div class="t" style="left:454.14px;top:216.00px;font-size:12.90px;line-height:12.90px;color:#222;transform:scaleX(0.9200);transform-origin:0 0;">2025</div>
<div class="t" style="left:518.66px;top:216.00px;font-size:12.90px;line-height:12.90px;color:#222;transform:scaleX(0.9200);transform-origin:0 0;">Apr</div>
<div class="t" style="left:10.08px;top:234.00px;font-size:11.60px;line-height:11.60px;color:#333;">9</div>
<div class="t" style="left:39.81px;top:234.00px;font-size:12.90px;line-height:12.90px;color:#222;transform:scaleX(0.9200);transform-origin:0 0;">202507</div>
<div class="t" style="left:125.38px;top:234.00px;font-size:12.90px;line-height:12.90px;color:#222;transform:scaleX(0.9200);transform-origin:0 0;">SD</div>
<div class="t" style="left:230.29px;top:234.00px;font-size:12.90px;line-height:12.90px;color:#222;transform:scaleX(0.9200);transform-origin:0 0;">731</div>
<div class="t" style="left:356.80px;top:234.00px;font-size:12.90px;line-height:12.90px;color:#222;transform:scaleX(0.9200);transform-origin:0 0;">1,404</div>
<div class="t" style="left:454.14px;top:234.00px;font-size:12.90px;line-height:12.90px;color:#222;transform:scaleX(0.9200);transform-origin:0 0;">2025</div>
<div class="t" style="left:520.53px;top:234.00px;font-size:12.90px;line-height:12.90px;color:#222;transform:scaleX(0.9200);transform-origin:0 0;">Jul</div>
<div class="t" style="left:6.63px;top:252.00px;font-size:11.60px;line-height:11.60px;color:#333;">10</div>
<div class="t" style="left:39.81px;top:252.00px;font-size:12.90px;line-height:12.90px;color:#222;transform:scaleX(0.9200);transform-origin:0 0;">202412</div>
<div class="t" style="left:120.40px;top:252.00px;font-size:12.90px;line-height:12.90px;color:#222;transform:scaleX(0.9200);transform-origin:0 0;">HOU</div>
<div class="t" style="left:230.32px;top:252.00px;font-size:12.90px;line-height:12.90px;color:#222;transform:scaleX(0.9200);transform-origin:0 0;">287</div>
<div class="t" style="left:362.05px;top:252.00px;font-size:12.90px;line-height:12.90px;color:#222;transform:scaleX(0.9200);transform-origin:0 0;">551</div>
<div class="t" style="left:454.08px;top:252.00px;font-size:12.90px;line-height:12.90px;color:#222;transform:scaleX(0.9200);transform-origin:0 0;">2024</div>
<div class="t" style="left:516.91px;top:252.00px;font-size:12.90px;line-height:12.90px;color:#222;transform:scaleX(0.9200);transform-origin:0 0;">Dec</div>
<div class="t" style="left:7.12px;top:270.00px;font-size:11.60px;line-height:11.60px;color:#333;">11</div>
<div class="t" style="left:39.75px;top:271.00px;font-size:12.90px;line-height:12.90px;color:#222;transform:scaleX(0.9200);transform-origin:0 0;">202403</div>
<div class="t" style="left:124.25px;top:271.00px;font-size:12.90px;line-height:12.90px;color:#222;transform:scaleX(0.9200);transform-origin:0 0;">WA</div>
<div class="t" style="left:230.29px;top:271.00px;font-size:12.90px;line-height:12.90px;color:#222;transform:scaleX(0.9200);transform-origin:0 0;">845</div>
<div class="t" style="left:356.83px;top:271.00px;font-size:12.90px;line-height:12.90px;color:#222;transform:scaleX(0.9200);transform-origin:0 0;">1,330</div>
<div class="t" style="left:454.08px;top:271.00px;font-size:12.90px;line-height:12.90px;color:#222;transform:scaleX(0.9200);transform-origin:0 0;">2024</div>
<div class="t" style="left:517.21px;top:271.00px;font-size:12.90px;line-height:12.90px;color:#222;transform:scaleX(0.9200);transform-origin:0 0;">Mar</div>
<div class="t" style="left:6.72px;top:288.00px;font-size:11.60px;line-height:11.60px;color:#333;">12</div>
<div class="t" style="left:39.78px;top:289.00px;font-size:12.90px;line-height:12.90px;color:#222;transform:scaleX(0.9200);transform-origin:0 0;">202501</div>
<div class="t" style="left:120.81px;top:289.00px;font-size:12.90px;line-height:12.90px;color:#222;transform:scaleX(0.9200);transform-origin:0 0;">NYC</div>
<div class="t" style="left:230.38px;top:289.00px;font-size:12.90px;line-height:12.90px;color:#222;transform:scaleX(0.9200);transform-origin:0 0;">392</div>
<div class="t" style="left:361.96px;top:289.00px;font-size:12.90px;line-height:12.90px;color:#222;transform:scaleX(0.9200);transform-origin:0 0;">718</div>
<div class="t" style="left:454.14px;top:289.00px;font-size:12.90px;line-height:12.90px;color:#222;transform:scaleX(0.9200);transform-origin:0 0;">2025</div>
<div class="t" style="left:518.54px;top:289.00px;font-size:12.90px;line-height:12.90px;color:#222;transform:scaleX(0.9200);transform-origin:0 0;">Jan</div>
<div class="t" style="left:6.66px;top:307.00px;font-size:11.60px;line-height:11.60px;color:#333;">13</div>
<div class="t" style="left:39.81px;top:307.00px;font-size:12.90px;line-height:12.90px;color:#222;transform:scaleX(0.9200);transform-origin:0 0;">202507</div>
<div class="t" style="left:125.89px;top:307.00px;font-size:12.90px;line-height:12.90px;color:#222;transform:scaleX(0.9200);transform-origin:0 0;">LA</div>
<div class="t" style="left:230.29px;top:307.00px;font-size:12.90px;line-height:12.90px;color:#222;transform:scaleX(0.9200);transform-origin:0 0;">619</div>
<div class="t" style="left:356.92px;top:307.00px;font-size:12.90px;line-height:12.90px;color:#222;transform:scaleX(0.9200);transform-origin:0 0;">1,087</div>
<div class="t" style="left:454.14px;top:307.00px;font-size:12.90px;line-height:12.90px;color:#222;transform:scaleX(0.9200);transform-origin:0 0;">2025</div>
<div class="t" style="left:520.53px;top:307.00px;font-size:12.90px;line-height:12.90px;color:#222;transform:scaleX(0.9200);transform-origin:0 0;">Jul</div>
<div class="t" style="left:6.60px;top:325.00px;font-size:11.60px;line-height:11.60px;color:#333;">14</div>
<div class="t" style="left:40.23px;top:325.00px;font-size:12.90px;line-height:12.90px;color:#222;transform:scaleX(0.9200);transform-origin:0 0;">202511</div>
<div class="t" style="left:125.89px;top:325.00px;font-size:12.90px;line-height:12.90px;color:#222;transform:scaleX(0.9200);transform-origin:0 0;">LA</div>
<div class="t" style="left:230.32px;top:325.00px;font-size:12.90px;line-height:12.90px;color:#222;transform:scaleX(0.9200);transform-origin:0 0;">262</div>
<div class="t" style="left:356.86px;top:325.00px;font-size:12.90px;line-height:12.90px;color:#222;transform:scaleX(0.9200);transform-origin:0 0;">1,673</div>
<div class="t" style="left:454.14px;top:325.00px;font-size:12.90px;line-height:12.90px;color:#222;transform:scaleX(0.9200);transform-origin:0 0;">2025</div>
<div class="t" style="left:516.79px;top:325.00px;font-size:12.90px;line-height:12.90px;color:#222;transform:scaleX(0.9200);transform-origin:0 0;">Nov</div>
<div class="t" style="left:6.66px;top:343.00px;font-size:11.60px;line-height:11.60px;color:#333;">15</div>
<div class="t" style="left:39.75px;top:344.00px;font-size:12.90px;line-height:12.90px;color:#222;transform:scaleX(0.9200);transform-origin:0 0;">202406</div>
<div class="t" style="left:120.40px;top:344.00px;font-size:12.90px;line-height:12.90px;color:#222;transform:scaleX(0.9200);transform-origin:0 0;">HOU</div>
<div class="t" style="left:230.08px;top:344.00px;font-size:12.90px;line-height:12.90px;color:#222;transform:scaleX(0.9200);transform-origin:0 0;">160</div>
<div class="t" style="left:365.25px;top:344.00px;font-size:12.90px;line-height:12.90px;color:#222;transform:scaleX(0.9200);transform-origin:0 0;">66</div>
<div class="t" style="left:454.08px;top:344.00px;font-size:12.90px;line-height:12.90px;color:#222;transform:scaleX(0.9200);transform-origin:0 0;">2024</div>
<div class="t" style="left:518.54px;top:344.00px;font-size:12.90px;line-height:12.90px;color:#222;transform:scaleX(0.9200);transform-origin:0 0;">Jun</div>
<div class="t" style="left:6.66px;top:362.00px;font-size:11.60px;line-height:11.60px;color:#333;">16</div>
<div class="t" style="left:39.78px;top:362.00px;font-size:12.90px;line-height:12.90px;color:#222;transform:scaleX(0.9200);transform-origin:0 0;">202409</div>
<div class="t" style="left:125.38px;top:362.00px;font-size:12.90px;line-height:12.90px;color:#222;transform:scaleX(0.9200);transform-origin:0 0;">SD</div>
<div class="t" style="left:230.29px;top:362.00px;font-size:12.90px;line-height:12.90px;color:#222;transform:scaleX(0.9200);transform-origin:0 0;">540</div>
<div class="t" style="left:361.96px;top:362.00px;font-size:12.90px;line-height:12.90px;color:#222;transform:scaleX(0.9200);transform-origin:0 0;">870</div>
<div class="t" style="left:454.08px;top:362.00px;font-size:12.90px;line-height:12.90px;color:#222;transform:scaleX(0.9200);transform-origin:0 0;">2024</div>
<div class="t" style="left:517.21px;top:362.00px;font-size:12.90px;line-height:12.90px;color:#222;transform:scaleX(0.9200);transform-origin:0 0;">Sep</div>
<div class="t" style="left:6.72px;top:380.00px;font-size:11.60px;line-height:11.60px;color:#333;">17</div>
<div class="t" style="left:6.66px;top:398.00px;font-size:11.60px;line-height:11.60px;color:#333;">18</div>
<div class="t" style="left:6.69px;top:416.00px;font-size:11.60px;line-height:11.60px;color:#333;">19</div>
<div class="t" style="left:6.77px;top:435.00px;font-size:11.60px;line-height:11.60px;color:#333;">20</div>
<div class="t" style="left:6.83px;top:453.00px;font-size:11.60px;line-height:11.60px;color:#333;">21</div>
<div class="t" style="left:6.86px;top:471.00px;font-size:11.60px;line-height:11.60px;color:#333;">22</div>
<div class="t" style="left:6.80px;top:489.00px;font-size:11.60px;line-height:11.60px;color:#333;">23</div>
<div class="t" style="left:6.75px;top:508.00px;font-size:11.60px;line-height:11.60px;color:#333;">24</div>
<div class="t" style="left:6.80px;top:526.00px;font-size:11.60px;line-height:11.60px;color:#333;">25</div>
<div class="t" style="left:39.72px;top:526.00px;font-size:12.90px;line-height:12.90px;color:#222;transform:scaleX(0.9200);transform-origin:0 0;">202410</div>
<div class="t" style="left:120.81px;top:526.00px;font-size:12.90px;line-height:12.90px;color:#222;transform:scaleX(0.9200);transform-origin:0 0;">NYC</div>
<div class="t" style="left:230.29px;top:526.00px;font-size:12.90px;line-height:12.90px;color:#222;transform:scaleX(0.9200);transform-origin:0 0;">560</div>
<div class="t" style="left:361.99px;top:526.00px;font-size:12.90px;line-height:12.90px;color:#222;transform:scaleX(0.9200);transform-origin:0 0;">679</div>
<div class="t" style="left:454.08px;top:526.00px;font-size:12.90px;line-height:12.90px;color:#222;transform:scaleX(0.9200);transform-origin:0 0;">2024</div>
<div class="t" style="left:518.34px;top:526.00px;font-size:12.90px;line-height:12.90px;color:#222;transform:scaleX(0.9200);transform-origin:0 0;">Oct</div>
<div class="t" style="left:6.80px;top:544.00px;font-size:11.60px;line-height:11.60px;color:#333;">26</div>
<div class="t" style="left:39.75px;top:544.00px;font-size:12.90px;line-height:12.90px;color:#222;transform:scaleX(0.9200);transform-origin:0 0;">202503</div>
<div class="t" style="left:125.89px;top:544.00px;font-size:12.90px;line-height:12.90px;color:#222;transform:scaleX(0.9200);transform-origin:0 0;">LA</div>
<div class="t" style="left:230.23px;top:544.00px;font-size:12.90px;line-height:12.90px;color:#222;transform:scaleX(0.9200);transform-origin:0 0;">670</div>
<div class="t" style="left:356.86px;top:544.00px;font-size:12.90px;line-height:12.90px;color:#222;transform:scaleX(0.9200);transform-origin:0 0;">1,915</div>
<div class="t" style="left:454.14px;top:544.00px;font-size:12.90px;line-height:12.90px;color:#222;transform:scaleX(0.9200);transform-origin:0 0;">2025</div>
<div class="t" style="left:517.21px;top:544.00px;font-size:12.90px;line-height:12.90px;color:#222;transform:scaleX(0.9200);transform-origin:0 0;">Mar</div>
<div class="t" style="left:6.86px;top:562.00px;font-size:11.60px;line-height:11.60px;color:#333;">27</div>
<div class="t" style="left:39.75px;top:563.00px;font-size:12.90px;line-height:12.90px;color:#222;transform:scaleX(0.9200);transform-origin:0 0;">202506</div>
<div class="t" style="left:120.40px;top:563.00px;font-size:12.90px;line-height:12.90px;color:#222;transform:scaleX(0.9200);transform-origin:0 0;">HOU</div>
<div class="t" style="left:230.32px;top:563.00px;font-size:12.90px;line-height:12.90px;color:#222;transform:scaleX(0.9200);transform-origin:0 0;">335</div>
<div class="t" style="left:365.22px;top:563.00px;font-size:12.90px;line-height:12.90px;color:#222;transform:scaleX(0.9200);transform-origin:0 0;">20</div>
<div class="t" style="left:454.14px;top:563.00px;font-size:12.90px;line-height:12.90px;color:#222;transform:scaleX(0.9200);transform-origin:0 0;">2025</div>
<div class="t" style="left:518.54px;top:563.00px;font-size:12.90px;line-height:12.90px;color:#222;transform:scaleX(0.9200);transform-origin:0 0;">Jun</div>
<div class="t" style="left:6.80px;top:581.00px;font-size:11.60px;line-height:11.60px;color:#333;">28</div>
<div class="t" style="left:39.81px;top:581.00px;font-size:12.90px;line-height:12.90px;color:#222;transform:scaleX(0.9200);transform-origin:0 0;">202407</div>
<div class="t" style="left:124.25px;top:581.00px;font-size:12.90px;line-height:12.90px;color:#222;transform:scaleX(0.9200);transform-origin:0 0;">WA</div>
<div class="t" style="left:230.29px;top:581.00px;font-size:12.90px;line-height:12.90px;color:#222;transform:scaleX(0.9200);transform-origin:0 0;">888</div>
<div class="t" style="left:356.89px;top:581.00px;font-size:12.90px;line-height:12.90px;color:#222;transform:scaleX(0.9200);transform-origin:0 0;">1,529</div>
<div class="t" style="left:454.08px;top:581.00px;font-size:12.90px;line-height:12.90px;color:#222;transform:scaleX(0.9200);transform-origin:0 0;">2024</div>
<div class="t" style="left:520.53px;top:581.00px;font-size:12.90px;line-height:12.90px;color:#222;transform:scaleX(0.9200);transform-origin:0 0;">Jul</div>
<div class="t" style="left:6.83px;top:599.00px;font-size:11.60px;line-height:11.60px;color:#333;">29</div>
<div class="t" style="left:39.81px;top:599.00px;font-size:12.90px;line-height:12.90px;color:#222;transform:scaleX(0.9200);transform-origin:0 0;">202502</div>
<div class="t" style="left:125.38px;top:599.00px;font-size:12.90px;line-height:12.90px;color:#222;transform:scaleX(0.9200);transform-origin:0 0;">SD</div>
<div class="t" style="left:230.44px;top:599.00px;font-size:12.90px;line-height:12.90px;color:#222;transform:scaleX(0.9200);transform-origin:0 0;">455</div>
<div class="t" style="left:362.05px;top:599.00px;font-size:12.90px;line-height:12.90px;color:#222;transform:scaleX(0.9200);transform-origin:0 0;">802</div>
<div class="t" style="left:454.14px;top:599.00px;font-size:12.90px;line-height:12.90px;color:#222;transform:scaleX(0.9200);transform-origin:0 0;">2025</div>
<div class="t" style="left:517.36px;top:599.00px;font-size:12.90px;line-height:12.90px;color:#222;transform:scaleX(0.9200);transform-origin:0 0;">Feb</div>
</div>
<div class="a" style="left:525px;top:171px;width:122px;height:40.5px;box-sizing:border-box;border:2px solid #f00;"></div>
<div class="a" style="left:88px;top:705px;width:741px;height:1.2px;background:#c6c6c6;"></div>
<div class="a" style="left:88px;top:706px;width:741px;height:22px;background:#e6e6e6;"></div>
<svg class="a" style="left:88px;top:706px" width="100" height="22"><path d="M22.5 7.5l-2.5 2.5 2.5 2.5M41 7.5l2.5 2.5-2.5 2.5" fill="none" stroke="#c4c4c4" stroke-width="1"/></svg>
<div class="a" style="left:161px;top:710px;width:1px;height:13px;background:#bdbdbd;"></div>
<div class="t" style="left:171.85px;top:710.00px;font-size:9.60px;line-height:9.60px;color:#555;transform:scaleX(0.9827);transform-origin:0 0;">V_Sales Performance Report</div>
<div class="t" style="left:347.49px;top:710.00px;font-size:9.60px;line-height:9.60px;color:#555;transform:scaleX(0.6659);transform-origin:0 0;">P1</div>
<div class="a" style="left:365px;top:710px;width:1px;height:13px;background:#bdbdbd;"></div>
<svg class="a" style="left:388px;top:709px" width="14" height="14"><circle cx="7" cy="7" r="5.5" fill="none" stroke="#777" stroke-width="1.1"/><path d="M7 4v6M4 7h6" stroke="#777" stroke-width="1.1"/></svg>
<div class="a" style="left:296px;top:699px;width:52.5px;height:27.8px;background:#f0f0f0;box-sizing:border-box;border:1px solid #808080;border-radius:5px 5px 0 0;"></div>
<div class="t" style="left:312.58px;top:705.00px;font-size:15.00px;line-height:15.00px;color:#222;transform:scaleX(0.8464);transform-origin:0 0;">D1</div>
<div class="a" style="left:200px;top:290px;width:652px;height:146px;box-shadow:-2px 4px 6px rgba(0,0,0,0.5);background:#e6e6e6"></div>
<div class="clip" style="left:202px;top:292px;width:648px;height:142px;background:#e6e6e6">
<div class="a" style="left:3.3700000000000045px;top:7.240000000000009px;width:119.995px;height:23.867999999999995px;background:#fff;box-sizing:border-box;border:1px solid #c6c6c6;"></div>
<div class="a" style="left:148.995px;top:7.240000000000009px;width:93.19999999999999px;height:23.867999999999995px;background:#fff;box-sizing:border-box;border:1px solid #c6c6c6;"></div>
<div class="a" style="left:244.8745px;top:7.240000000000009px;width:816.3155px;height:61.073999999999955px;background:#fdfdfd;box-sizing:border-box;border:1px solid #c6c6c6;"></div>
<svg class="a" style="left:0;top:0;overflow:visible" width="10" height="10"><polygon points="111.95,16.48 117.77,16.48 114.86,19.88" fill="#555"/><rect x="135.60" y="14.38" width="1.51" height="1.51" fill="#999"/><rect x="135.60" y="18.71" width="1.51" height="1.51" fill="#999"/><rect x="135.60" y="23.15" width="1.51" height="1.51" fill="#999"/><path d="M161.23,15.20L169.38,23.39M169.38,15.20L161.23,23.39" stroke="#5a5a5a" stroke-width="1.28"/><path d="M190.35,19.52L193.85,23.39L201.42,15.20" fill="none" stroke="#5a5a5a" stroke-width="1.46"/><text x="221.23" y="23.62" font-family="Liberation Serif" font-style="italic" font-weight="bold" font-size="12.23" fill="#505050">f</text><text x="226.12" y="23.62" font-family="Liberation Serif" font-style="italic" font-weight="bold" font-size="9.32" fill="#505050">x</text></svg>
<div class="t" style="left:8.34px;top:13.00px;font-size:14.33px;line-height:14.33px;color:#505050;transform:scaleX(0.8739);transform-origin:0 0;">CONCAT</div>
<div class="t" style="left:255.12px;top:13.00px;font-size:13.40px;line-height:13.40px;color:#444;transform:scaleX(0.8850);transform-origin:0 0;">=LEFT(A2,4)</div>
<div class="a" style="left:29.0px;top:98.5px;width:690.146px;height:64.0926px;background:#fff;"></div>
<div class="a" style="left:508.28099999999995px;top:77.44px;width:69.90000000000009px;height:21.060000000000002px;background:#d2d2d2;"></div>
<div class="a" style="left:508.28099999999995px;top:96.51100000000002px;width:69.90000000000009px;height:1.988999999999976px;background:#217346;"></div>
<div class="a" style="left:-1.289999999999992px;top:97.68100000000004px;width:720.4359999999999px;height:1.2869999999999777px;background:#b0b0b0;"></div>
<div class="a" style="left:29.0px;top:77.44px;width:1px;height:21.060000000000002px;background:#c9c9c9;"></div>
<div class="a" style="left:107.28800000000001px;top:77.44px;width:1px;height:21.060000000000002px;background:#c9c9c9;"></div>
<div class="a" style="left:201.42000000000002px;top:77.44px;width:1px;height:21.060000000000002px;background:#c9c9c9;"></div>
<div class="a" style="left:355.66599999999994px;top:77.44px;width:1px;height:21.060000000000002px;background:#c9c9c9;"></div>
<div class="a" style="left:508.28099999999995px;top:77.44px;width:1px;height:21.060000000000002px;background:#c9c9c9;"></div>
<div class="a" style="left:578.181px;top:77.44px;width:1px;height:21.060000000000002px;background:#c9c9c9;"></div>
<div class="a" style="left:649.013px;top:77.44px;width:1px;height:21.060000000000002px;background:#c9c9c9;"></div>
<div class="a" style="left:719.146px;top:77.44px;width:1px;height:21.060000000000002px;background:#c9c9c9;"></div>
<div class="a" style="left:-1.289999999999992px;top:98.5px;width:30.289999999999992px;height:64.0926px;background:#e6e6e6;"></div>
<div class="a" style="left:-1.289999999999992px;top:119.86419999999998px;width:30.289999999999992px;height:21.36420000000004px;background:#d2d2d2;"></div>
<div class="a" style="left:27.369px;top:119.86419999999998px;width:1.7475px;height:21.36420000000004px;background:#217346;"></div>
<div class="a" style="left:28.184499999999986px;top:98.5px;width:1px;height:64.0926px;background:#bdbdbd;"></div>
<div class="a" style="left:508.39750000000004px;top:98.5px;width:140.96500000000003px;height:21.364199999999983px;background:#ffff00;"></div>
<div class="a" style="left:-1.289999999999992px;top:119.86419999999998px;width:29.474499999999978px;height:1px;background:#cfcfcf;"></div>
<div class="a" style="left:29.0px;top:119.86419999999998px;width:690.146px;height:1px;background:#dadada;"></div>
<div class="a" style="left:-1.289999999999992px;top:141.22840000000002px;width:29.474499999999978px;height:1px;background:#cfcfcf;"></div>
<div class="a" style="left:29.0px;top:141.22840000000002px;width:690.146px;height:1px;background:#dadada;"></div>
<div class="a" style="left:-1.289999999999992px;top:162.5926px;width:29.474499999999978px;height:1px;background:#cfcfcf;"></div>
<div class="a" style="left:29.0px;top:162.5926px;width:690.146px;height:1px;background:#dadada;"></div>
<div class="a" style="left:107.28800000000001px;top:98.5px;width:1px;height:64.0926px;background:#dadada;"></div>
<div class="a" style="left:201.42000000000002px;top:98.5px;width:1px;height:64.0926px;background:#dadada;"></div>
<div class="a" style="left:355.66599999999994px;top:98.5px;width:1px;height:64.0926px;background:#dadada;"></div>
<div class="a" style="left:508.28099999999995px;top:98.5px;width:1px;height:64.0926px;background:#dadada;"></div>
<div class="a" style="left:578.181px;top:98.5px;width:1px;height:64.0926px;background:#dadada;"></div>
<div class="a" style="left:649.013px;top:98.5px;width:1px;height:64.0926px;background:#dadada;"></div>
<div class="a" style="left:719.146px;top:98.5px;width:1px;height:64.0926px;background:#dadada;"></div>
<svg class="a" style="left:11.53px;top:80.95px" width="16.1" height="16.1"><polygon points="15.14,0 15.14,15.14 0,15.14" fill="#c0c0c0"/></svg>
<div class="t" style="left:63.96px;top:81.00px;font-size:12.58px;line-height:12.58px;color:#444;">A</div>
<div class="t" style="left:149.98px;top:81.00px;font-size:12.58px;line-height:12.58px;color:#444;">B</div>
<div class="t" style="left:273.92px;top:81.00px;font-size:12.58px;line-height:12.58px;color:#444;">C</div>
<div class="t" style="left:427.22px;top:81.00px;font-size:12.58px;line-height:12.58px;color:#444;">D</div>
<div class="t" style="left:538.80px;top:81.00px;font-size:12.58px;line-height:12.58px;color:#217346;">E</div>
<div class="t" style="left:609.51px;top:81.00px;font-size:12.58px;line-height:12.58px;color:#444;">F</div>
<div class="t" style="left:679.33px;top:81.00px;font-size:12.58px;line-height:12.58px;color:#444;">G</div>
<div class="a" style="left:29.0px;top:119.86419999999998px;width:78.28800000000001px;height:21.36420000000004px;background:#e8eef8;"></div>
<div class="t" style="left:10.25px;top:103.00px;font-size:13.51px;line-height:13.51px;color:#333;">1</div>
<div class="t" style="left:52.03px;top:103.00px;font-size:14.68px;line-height:14.68px;color:#000;font-weight:bold;">Date</div>
<div class="t" style="left:129.03px;top:103.00px;font-size:14.68px;line-height:14.68px;color:#000;font-weight:bold;">Branch</div>
<div class="t" style="left:227.20px;top:103.00px;font-size:14.68px;line-height:14.68px;color:#000;font-weight:bold;">Target Amount</div>
<div class="t" style="left:379.97px;top:103.00px;font-size:14.68px;line-height:14.68px;color:#000;font-weight:bold;">Actual Amount</div>
<div class="t" style="left:527.67px;top:103.00px;font-size:14.68px;line-height:14.68px;color:#000;font-weight:bold;">Year</div>
<div class="t" style="left:591.54px;top:103.00px;font-size:14.68px;line-height:14.68px;color:#000;font-weight:bold;">Month</div>
<div class="t" style="left:10.45px;top:125.00px;font-size:13.51px;line-height:13.51px;color:#217346;">2</div>
<div class="t" style="left:45.02px;top:123.00px;font-size:15.03px;line-height:15.03px;color:#222;transform:scaleX(0.9200);transform-origin:0 0;">202503</div>
<div class="t" style="left:139.46px;top:123.00px;font-size:15.03px;line-height:15.03px;color:#222;transform:scaleX(0.9200);transform-origin:0 0;">NYC</div>
<div class="t" style="left:267.21px;top:123.00px;font-size:15.03px;line-height:15.03px;color:#222;transform:scaleX(0.9200);transform-origin:0 0;">471</div>
<div class="t" style="left:10.45px;top:146.00px;font-size:13.51px;line-height:13.51px;color:#333;">3</div>
<div class="t" style="left:45.05px;top:145.00px;font-size:15.03px;line-height:15.03px;color:#222;transform:scaleX(0.9200);transform-origin:0 0;">202509</div>
<div class="t" style="left:145.37px;top:145.00px;font-size:15.03px;line-height:15.03px;color:#222;transform:scaleX(0.9200);transform-origin:0 0;">LA</div>
<div class="t" style="left:267.03px;top:145.00px;font-size:15.03px;line-height:15.03px;color:#222;transform:scaleX(0.9200);transform-origin:0 0;">598</div>
<div class="t" style="left:420.39px;top:145.00px;font-size:15.03px;line-height:15.03px;color:#222;transform:scaleX(0.9200);transform-origin:0 0;">233</div>
<div class="t" style="left:527.78px;top:145.00px;font-size:15.03px;line-height:15.03px;color:#222;transform:scaleX(0.9200);transform-origin:0 0;">2025</div>
<div class="t" style="left:601.26px;top:145.00px;font-size:15.03px;line-height:15.03px;color:#222;transform:scaleX(0.9200);transform-origin:0 0;">Sep</div>
<div class="a" style="left:29.5px;top:119.36419999999998px;width:78.63749999999999px;height:1.3px;background:#3a6fd1;"></div>
<div class="a" style="left:29.5px;top:139.4284px;width:78.63749999999999px;height:1.3px;background:#3a6fd1;"></div>
<div class="a" style="left:29.5px;top:119.36419999999998px;width:1.3px;height:21.36420000000004px;background:#3a6fd1;"></div>
<div class="a" style="left:106.83749999999998px;top:119.36419999999998px;width:1.3px;height:21.36420000000004px;background:#3a6fd1;"></div>
<div class="a" style="left:27.400000000000006px;top:117.26419999999996px;width:4.2px;height:4.2px;background:#3a6fd1;"></div>
<div class="a" style="left:106.03749999999997px;top:117.26419999999996px;width:4.2px;height:4.2px;background:#3a6fd1;"></div>
<div class="a" style="left:27.400000000000006px;top:138.6284px;width:4.2px;height:4.2px;background:#3a6fd1;"></div>
<div class="a" style="left:106.03749999999997px;top:138.6284px;width:4.2px;height:4.2px;background:#3a6fd1;"></div>
<div class="a" style="left:508.39750000000004px;top:118.46019999999999px;width:69.89999999999998px;height:2.1059999999999945px;background:#217346;"></div>
<div class="t" style="left:411.16px;top:123.00px;font-size:15.03px;line-height:15.03px;color:#222;transform:scaleX(0.9200);transform-origin:0 0;">1,603</div>
<div class="a" style="left:438.5px;top:120.36419999999998px;width:300px;height:19.86420000000004px;background:#fff;"></div>
<div class="t" style="left:438.35px;top:123.00px;font-size:15.03px;line-height:15.03px;color:#222;transform:scaleX(0.8612);transform-origin:0 0">=LEFT(<span style="color:#3a6fd1">A2</span>,4)</div>
</div>
<div class="a" style="left:200px;top:290px;width:652px;height:146px;box-sizing:border-box;border:2px solid #f00;"></div>
<div class="a" style="left:9px;top:455px;width:843px;height:177px;box-shadow:-2px 4px 6px rgba(0,0,0,0.5);background:#e6e6e6"></div>
<div class="clip" style="left:11px;top:457px;width:839px;height:173px;background:#e6e6e6">
<div class="a" style="left:4.008000000000003px;top:8.591999999999985px;width:127.30799999999999px;height:25.214400000000012px;background:#fff;box-sizing:border-box;border:1px solid #c6c6c6;"></div>
<div class="a" style="left:158.50799999999998px;top:8.591999999999985px;width:98.88px;height:25.214400000000012px;background:#fff;box-sizing:border-box;border:1px solid #c6c6c6;"></div>
<div class="a" style="left:260.2308px;top:8.591999999999985px;width:866.0652px;height:64.51919999999996px;background:#fdfdfd;box-sizing:border-box;border:1px solid #c6c6c6;"></div>
<svg class="a" style="left:0;top:0;overflow:visible" width="10" height="10"><polygon points="119.20,18.36 125.38,18.36 122.29,21.94" fill="#555"/><rect x="144.29" y="16.13" width="1.61" height="1.61" fill="#999"/><rect x="144.29" y="20.70" width="1.61" height="1.61" fill="#999"/><rect x="144.29" y="25.40" width="1.61" height="1.61" fill="#999"/><path d="M171.49,17.00L180.14,25.65M180.14,17.00L171.49,25.65" stroke="#5a5a5a" stroke-width="1.36"/><path d="M202.39,21.57L206.09,25.65L214.13,17.00" fill="none" stroke="#5a5a5a" stroke-width="1.54"/><text x="235.14" y="25.90" font-family="Liberation Serif" font-style="italic" font-weight="bold" font-size="12.98" fill="#505050">f</text><text x="240.33" y="25.90" font-family="Liberation Serif" font-style="italic" font-weight="bold" font-size="9.89" fill="#505050">x</text></svg>
<div class="t" style="left:9.28px;top:14.00px;font-size:15.20px;line-height:15.20px;color:#505050;transform:scaleX(0.8739);transform-origin:0 0;">CONCAT</div>
<div class="t" style="left:272.32px;top:14.00px;font-size:14.21px;line-height:14.21px;color:#444;transform:scaleX(0.9014);transform-origin:0 0;">=TEXT(DATE(LEFT(A2,4), RIGHT(A2,2), 1), "mmm")</div>
<div class="a" style="left:31.200000000000003px;top:105.0px;width:807.4788px;height:90.27744000000007px;background:#fff;"></div>
<div class="a" style="left:613.8504px;top:82.75199999999995px;width:75.14880000000005px;height:22.248000000000047px;background:#d2d2d2;"></div>
<div class="a" style="left:613.8504px;top:102.89880000000005px;width:75.14880000000005px;height:2.101199999999949px;background:#217346;"></div>
<div class="a" style="left:-0.9359999999999999px;top:104.13480000000004px;width:839.6148000000001px;height:1.3596000000000004px;background:#b0b0b0;"></div>
<div class="a" style="left:31.200000000000003px;top:82.75199999999995px;width:1px;height:22.248000000000047px;background:#c9c9c9;"></div>
<div class="a" style="left:114.25919999999999px;top:82.75199999999995px;width:1px;height:22.248000000000047px;background:#c9c9c9;"></div>
<div class="a" style="left:214.128px;top:82.75199999999995px;width:1px;height:22.248000000000047px;background:#c9c9c9;"></div>
<div class="a" style="left:377.77439999999996px;top:82.75199999999995px;width:1px;height:22.248000000000047px;background:#c9c9c9;"></div>
<div class="a" style="left:539.6904px;top:82.75199999999995px;width:1px;height:22.248000000000047px;background:#c9c9c9;"></div>
<div class="a" style="left:613.8504px;top:82.75199999999995px;width:1px;height:22.248000000000047px;background:#c9c9c9;"></div>
<div class="a" style="left:688.9992000000001px;top:82.75199999999995px;width:1px;height:22.248000000000047px;background:#c9c9c9;"></div>
<div class="a" style="left:763.4064px;top:82.75199999999995px;width:1px;height:22.248000000000047px;background:#c9c9c9;"></div>
<div class="a" style="left:838.6788px;top:82.75199999999995px;width:1px;height:22.248000000000047px;background:#c9c9c9;"></div>
<div class="a" style="left:-0.9359999999999999px;top:105.0px;width:32.136px;height:90.27744000000007px;background:#e6e6e6;"></div>
<div class="a" style="left:-0.9359999999999999px;top:127.56935999999996px;width:32.136px;height:22.569360000000074px;background:#d2d2d2;"></div>
<div class="a" style="left:29.469599999999993px;top:127.56935999999996px;width:1.854px;height:22.569360000000074px;background:#217346;"></div>
<div class="a" style="left:30.3348px;top:105.0px;width:1px;height:90.27744000000007px;background:#bdbdbd;"></div>
<div class="a" style="left:539.814px;top:105.0px;width:149.55600000000004px;height:22.56935999999996px;background:#ffff00;"></div>
<div class="a" style="left:-0.9359999999999999px;top:127.56935999999996px;width:31.2708px;height:1px;background:#cfcfcf;"></div>
<div class="a" style="left:31.200000000000003px;top:127.56935999999996px;width:807.4788px;height:1px;background:#dadada;"></div>
<div class="a" style="left:-0.9359999999999999px;top:150.13872000000003px;width:31.2708px;height:1px;background:#cfcfcf;"></div>
<div class="a" style="left:31.200000000000003px;top:150.13872000000003px;width:807.4788px;height:1px;background:#dadada;"></div>
<div class="a" style="left:-0.9359999999999999px;top:172.70808px;width:31.2708px;height:1px;background:#cfcfcf;"></div>
<div class="a" style="left:31.200000000000003px;top:172.70808px;width:807.4788px;height:1px;background:#dadada;"></div>
<div class="a" style="left:-0.9359999999999999px;top:195.27744000000007px;width:31.2708px;height:1px;background:#cfcfcf;"></div>
<div class="a" style="left:31.200000000000003px;top:195.27744000000007px;width:807.4788px;height:1px;background:#dadada;"></div>
<div class="a" style="left:114.25919999999999px;top:105.0px;width:1px;height:90.27744000000007px;background:#dadada;"></div>
<div class="a" style="left:214.128px;top:105.0px;width:1px;height:90.27744000000007px;background:#dadada;"></div>
<div class="a" style="left:377.77439999999996px;top:105.0px;width:1px;height:90.27744000000007px;background:#dadada;"></div>
<div class="a" style="left:539.6904px;top:105.0px;width:1px;height:90.27744000000007px;background:#dadada;"></div>
<div class="a" style="left:613.8504px;top:105.0px;width:1px;height:90.27744000000007px;background:#dadada;"></div>
<div class="a" style="left:688.9992000000001px;top:105.0px;width:1px;height:90.27744000000007px;background:#dadada;"></div>
<div class="a" style="left:763.4064px;top:105.0px;width:1px;height:90.27744000000007px;background:#dadada;"></div>
<div class="a" style="left:838.6788px;top:105.0px;width:1px;height:90.27744000000007px;background:#dadada;"></div>
<svg class="a" style="left:12.66px;top:86.46px" width="17.1" height="17.1"><polygon points="16.07,0 16.07,16.07 0,16.07" fill="#c0c0c0"/></svg>
<div class="t" style="left:68.29px;top:86.00px;font-size:13.35px;line-height:13.35px;color:#444;">A</div>
<div class="t" style="left:159.55px;top:86.00px;font-size:13.35px;line-height:13.35px;color:#444;">B</div>
<div class="t" style="left:291.05px;top:86.00px;font-size:13.35px;line-height:13.35px;color:#444;">C</div>
<div class="t" style="left:453.69px;top:86.00px;font-size:13.35px;line-height:13.35px;color:#444;">D</div>
<div class="t" style="left:572.06px;top:86.00px;font-size:13.35px;line-height:13.35px;color:#444;">E</div>
<div class="t" style="left:647.09px;top:86.00px;font-size:13.35px;line-height:13.35px;color:#217346;">F</div>
<div class="t" style="left:721.16px;top:86.00px;font-size:13.35px;line-height:13.35px;color:#444;">G</div>
<div class="t" style="left:796.24px;top:86.00px;font-size:13.35px;line-height:13.35px;color:#444;">H</div>
<div class="a" style="left:31.200000000000003px;top:127.56935999999996px;width:83.05919999999999px;height:22.569360000000074px;background:#d6e2f3;"></div>
<div class="t" style="left:11.31px;top:110.00px;font-size:14.34px;line-height:14.34px;color:#333;">1</div>
<div class="t" style="left:55.64px;top:109.00px;font-size:15.57px;line-height:15.57px;color:#000;font-weight:bold;">Date</div>
<div class="t" style="left:137.33px;top:109.00px;font-size:15.57px;line-height:15.57px;color:#000;font-weight:bold;">Branch</div>
<div class="t" style="left:241.48px;top:109.00px;font-size:15.57px;line-height:15.57px;color:#000;font-weight:bold;">Target Amount</div>
<div class="t" style="left:403.56px;top:109.00px;font-size:15.57px;line-height:15.57px;color:#000;font-weight:bold;">Actual Amount</div>
<div class="t" style="left:560.26px;top:109.00px;font-size:15.57px;line-height:15.57px;color:#000;font-weight:bold;">Year</div>
<div class="t" style="left:628.03px;top:109.00px;font-size:15.57px;line-height:15.57px;color:#000;font-weight:bold;">Month</div>
<div class="t" style="left:11.52px;top:132.00px;font-size:14.34px;line-height:14.34px;color:#217346;">2</div>
<div class="t" style="left:48.20px;top:132.00px;font-size:15.94px;line-height:15.94px;color:#222;transform:scaleX(0.9200);transform-origin:0 0;">202503</div>
<div class="t" style="left:148.39px;top:132.00px;font-size:15.94px;line-height:15.94px;color:#222;transform:scaleX(0.9200);transform-origin:0 0;">NYC</div>
<div class="t" style="left:283.92px;top:132.00px;font-size:15.94px;line-height:15.94px;color:#222;transform:scaleX(0.9200);transform-origin:0 0;">471</div>
<div class="t" style="left:11.52px;top:155.00px;font-size:14.34px;line-height:14.34px;color:#333;">3</div>
<div class="t" style="left:48.23px;top:154.00px;font-size:15.94px;line-height:15.94px;color:#222;transform:scaleX(0.9200);transform-origin:0 0;">202509</div>
<div class="t" style="left:154.66px;top:154.00px;font-size:15.94px;line-height:15.94px;color:#222;transform:scaleX(0.9200);transform-origin:0 0;">LA</div>
<div class="t" style="left:283.74px;top:154.00px;font-size:15.94px;line-height:15.94px;color:#222;transform:scaleX(0.9200);transform-origin:0 0;">598</div>
<div class="t" style="left:11.60px;top:178.00px;font-size:14.34px;line-height:14.34px;color:#333;">4</div>
<div class="t" style="left:48.12px;top:177.00px;font-size:15.94px;line-height:15.94px;color:#222;transform:scaleX(0.9200);transform-origin:0 0;">202504</div>
<div class="t" style="left:154.04px;top:177.00px;font-size:15.94px;line-height:15.94px;color:#222;transform:scaleX(0.9200);transform-origin:0 0;">SD</div>
<div class="t" style="left:283.63px;top:177.00px;font-size:15.94px;line-height:15.94px;color:#222;transform:scaleX(0.9200);transform-origin:0 0;">964</div>
<div class="t" style="left:446.52px;top:177.00px;font-size:15.94px;line-height:15.94px;color:#222;transform:scaleX(0.9200);transform-origin:0 0;">363</div>
<div class="t" style="left:560.38px;top:177.00px;font-size:15.94px;line-height:15.94px;color:#222;transform:scaleX(0.9200);transform-origin:0 0;">2025</div>
<div class="t" style="left:640.13px;top:177.00px;font-size:15.94px;line-height:15.94px;color:#222;transform:scaleX(0.9200);transform-origin:0 0;">Apr</div>
<div class="a" style="left:31.700000000000003px;top:127.06935999999996px;width:83.42999999999999px;height:1.3px;background:#3a6fd1;"></div>
<div class="a" style="left:31.700000000000003px;top:148.33872000000008px;width:83.42999999999999px;height:1.3px;background:#3a6fd1;"></div>
<div class="a" style="left:31.700000000000003px;top:127.06935999999996px;width:1.3px;height:22.569360000000074px;background:#3a6fd1;"></div>
<div class="a" style="left:113.83px;top:127.06935999999996px;width:1.3px;height:22.569360000000074px;background:#3a6fd1;"></div>
<div class="a" style="left:29.6px;top:124.96935999999994px;width:4.2px;height:4.2px;background:#3a6fd1;"></div>
<div class="a" style="left:113.03px;top:124.96935999999994px;width:4.2px;height:4.2px;background:#3a6fd1;"></div>
<div class="a" style="left:29.6px;top:147.53872px;width:4.2px;height:4.2px;background:#3a6fd1;"></div>
<div class="a" style="left:113.03px;top:147.53872px;width:4.2px;height:4.2px;background:#3a6fd1;"></div>
<div class="a" style="left:613.974px;top:126.08615999999995px;width:75.39599999999996px;height:2.224800000000073px;background:#217346;"></div>
<div class="t" style="left:437.30px;top:132.00px;font-size:15.94px;line-height:15.94px;color:#222;transform:scaleX(0.9200);transform-origin:0 0;">1,603</div>
<div class="t" style="left:443.27px;top:154.00px;font-size:15.94px;line-height:15.94px;color:#222;transform:scaleX(0.9200);transform-origin:0 0;">233</div>
<div class="a" style="left:465.5px;top:128.06935999999996px;width:380px;height:45.138720000000035px;background:#fff;"></div>
<div class="t" style="left:465.28px;top:132.00px;font-size:15.94px;line-height:15.94px;color:#222;transform:scaleX(0.9087);transform-origin:0 0">=TEXT(DATE<span style="color:#e0506a">(</span>LEFT<span style="color:#9b6fc8">(</span><span style="color:#3a6fd1">A2</span>,4<span style="color:#9b6fc8">)</span>, RIGHT<span style="color:#9b6fc8">(</span><span style="color:#3a6fd1">A2</span>,2<span style="color:#9b6fc8">)</span>, 1<span style="color:#e0506a">)</span>, "mmm")</div>
</div>
<div class="a" style="left:9px;top:455px;width:843px;height:177px;box-sizing:border-box;border:2px solid #f00;"></div>
</body></html>
